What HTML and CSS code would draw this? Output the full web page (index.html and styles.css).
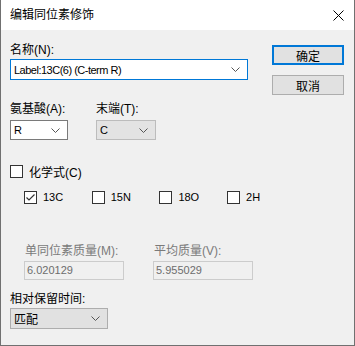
FILE: index.html
```html
<!DOCTYPE html>
<html lang="zh-CN">
<head>
    <meta charset="UTF-8">
    <title>编辑同位素修饰</title>
    <link rel="stylesheet" href="styles.css">
</head>
<body>
    <div class="window">
        <div class="titlebar">
            <span class="title">编辑同位素修饰</span>
            <svg class="close" width="11" height="11" viewBox="0 0 11 11">
                <path d="M0.5 0.5 L10.5 10.5 M10.5 0.5 L0.5 10.5" stroke="#000" stroke-width="1" fill="none"/>
            </svg>
        </div>

        <div class="dialog">
            <div class="top-row">
                <div class="name-col">
                    <div class="label">名称(N):</div>
                    <div class="combo combo-edit">
                        <span class="value">Label:13C(6) (C-term R)</span>
                        <svg class="chevron" width="9" height="5" viewBox="0 0 9 5"><path d="M0.5 0.5 L4.5 4.5 L8.5 0.5" stroke="#555" fill="none"/></svg>
                    </div>
                </div>
                <div class="buttons">
                    <div class="btn btn-default">确定</div>
                    <div class="btn">取消</div>
                </div>
            </div>

            <div class="pick-row">
                <div class="field field-aa">
                    <div class="label">氨基酸(A):</div>
                    <div class="combo combo-white">
                        <span class="value">R</span>
                        <svg class="chevron" width="9" height="5" viewBox="0 0 9 5"><path d="M0.5 0.5 L4.5 4.5 L8.5 0.5" stroke="#555" fill="none"/></svg>
                    </div>
                </div>
                <div class="field field-term">
                    <div class="label">末端(T):</div>
                    <div class="combo combo-disabled">
                        <span class="value">C</span>
                        <svg class="chevron" width="9" height="5" viewBox="0 0 9 5"><path d="M0.5 0.5 L4.5 4.5 L8.5 0.5" stroke="#555" fill="none"/></svg>
                    </div>
                </div>
            </div>

            <div class="check-line formula">
                <span class="box"></span>
                <span>化学式(C)</span>
            </div>

            <div class="isotopes">
                <div class="check-line iso">
                    <span class="box checked">
                        <svg width="11" height="11" viewBox="0 0 11 11"><path d="M1.5 5.5 L4 8 L9.5 2.5" stroke="#333" stroke-width="1.2" fill="none"/></svg>
                    </span>
                    <span class="small">13C</span>
                </div>
                <div class="check-line iso">
                    <span class="box"></span>
                    <span class="small">15N</span>
                </div>
                <div class="check-line iso">
                    <span class="box"></span>
                    <span class="small">18O</span>
                </div>
                <div class="check-line iso">
                    <span class="box"></span>
                    <span class="small">2H</span>
                </div>
            </div>

            <div class="mass-row">
                <div class="field">
                    <div class="label disabled">单同位素质量(M):</div>
                    <div class="textbox">6.020129</div>
                </div>
                <div class="field">
                    <div class="label disabled">平均质量(V):</div>
                    <div class="textbox">5.955029</div>
                </div>
            </div>

            <div class="retention">
                <div class="label">相对保留时间:</div>
                <div class="combo combo-list">
                    <span class="value">匹配</span>
                    <svg class="chevron" width="9" height="5" viewBox="0 0 9 5"><path d="M0.5 0.5 L4.5 4.5 L8.5 0.5" stroke="#555" fill="none"/></svg>
                </div>
            </div>
        </div>
    </div>
</body>
</html>
```

FILE: styles.css
```css
* {
    margin: 0;
    padding: 0;
    box-sizing: border-box;
}

body {
    font-family: "Liberation Sans", "Noto Sans CJK SC", sans-serif;
    font-size: 12px;
    color: #000;
    background: #f0f0f0;
}

.window {
    width: 355px;
    height: 346px;
    border: 1px solid #707070;
    border-top: none;
    background: #f0f0f0;
    display: flex;
    flex-direction: column;
}

.titlebar {
    height: 30px;
    background: #fff;
    display: flex;
    align-items: center;
    padding: 0 10px 0 9px;
}

.title {
    flex: 1;
    line-height: 16px;
}

.dialog {
    flex: 1;
    padding: 12px 10px 0 9px;
}

.label {
    line-height: 16px;
    height: 16px;
    white-space: nowrap;
}

.label.disabled {
    color: #7a7a7a;
}

.top-row {
    display: flex;
    align-items: flex-start;
}

.name-col {
    width: 238px;
}

.combo {
    margin-top: 1px;
    height: 21px;
    display: flex;
    align-items: center;
    padding-left: 3px;
    padding-right: 7px;
    border: 1px solid #7a7a7a;
    background: #fff;
}

.combo .value {
    flex: 1;
    font-size: 11px;
    white-space: nowrap;
}

.combo-edit {
    border-color: #0078d7;
}

.combo-edit .value {
    letter-spacing: -0.5px;
}

.combo-white {
    margin-top: 3px;
    height: 20px;
    width: 58px;
}

.combo-disabled {
    margin-top: 3px;
    height: 20px;
    width: 60px;
    background: #e3e3e3;
    border-color: #bcbcbc;
}

.combo-list {
    width: 98px;
    background: #e1e1e1;
    border-color: #adadad;
}

.combo-list .value {
    font-size: 12px;
}

.buttons {
    margin-left: auto;
    margin-top: 3px;
    display: flex;
    flex-direction: column;
    gap: 10px;
}

.btn {
    width: 72px;
    height: 20px;
    background: #e1e1e1;
    border: 1px solid #adadad;
    display: flex;
    align-items: center;
    justify-content: center;
}

.btn-default {
    border: 2px solid #0078d7;
}

.pick-row {
    display: flex;
    gap: 28px;
    margin-top: 6px;
}

.check-line {
    display: flex;
    align-items: center;
    height: 16px;
    gap: 6px;
}

.box {
    width: 13px;
    height: 13px;
    border: 1px solid #333;
    background: #fff;
    display: flex;
    align-items: center;
    justify-content: center;
}

.formula {
    margin-top: 23px;
}

.isotopes {
    display: flex;
    margin-top: 10px;
    padding-left: 14px;
}

.iso {
    width: 67.7px;
}

.small {
    font-size: 11px;
}

.mass-row {
    display: flex;
    gap: 29px;
    margin-top: 38px;
    padding-left: 14px;
}

.mass-row .label {
    padding-left: 1px;
}

.textbox {
    margin-top: 2px;
    width: 100px;
    height: 19px;
    border: 1px solid #cccccc;
    background: #f0f0f0;
    color: #6d6d6d;
    font-size: 11px;
    line-height: 17px;
    padding-left: 2px;
}

.retention {
    margin-top: 11px;
}
```
